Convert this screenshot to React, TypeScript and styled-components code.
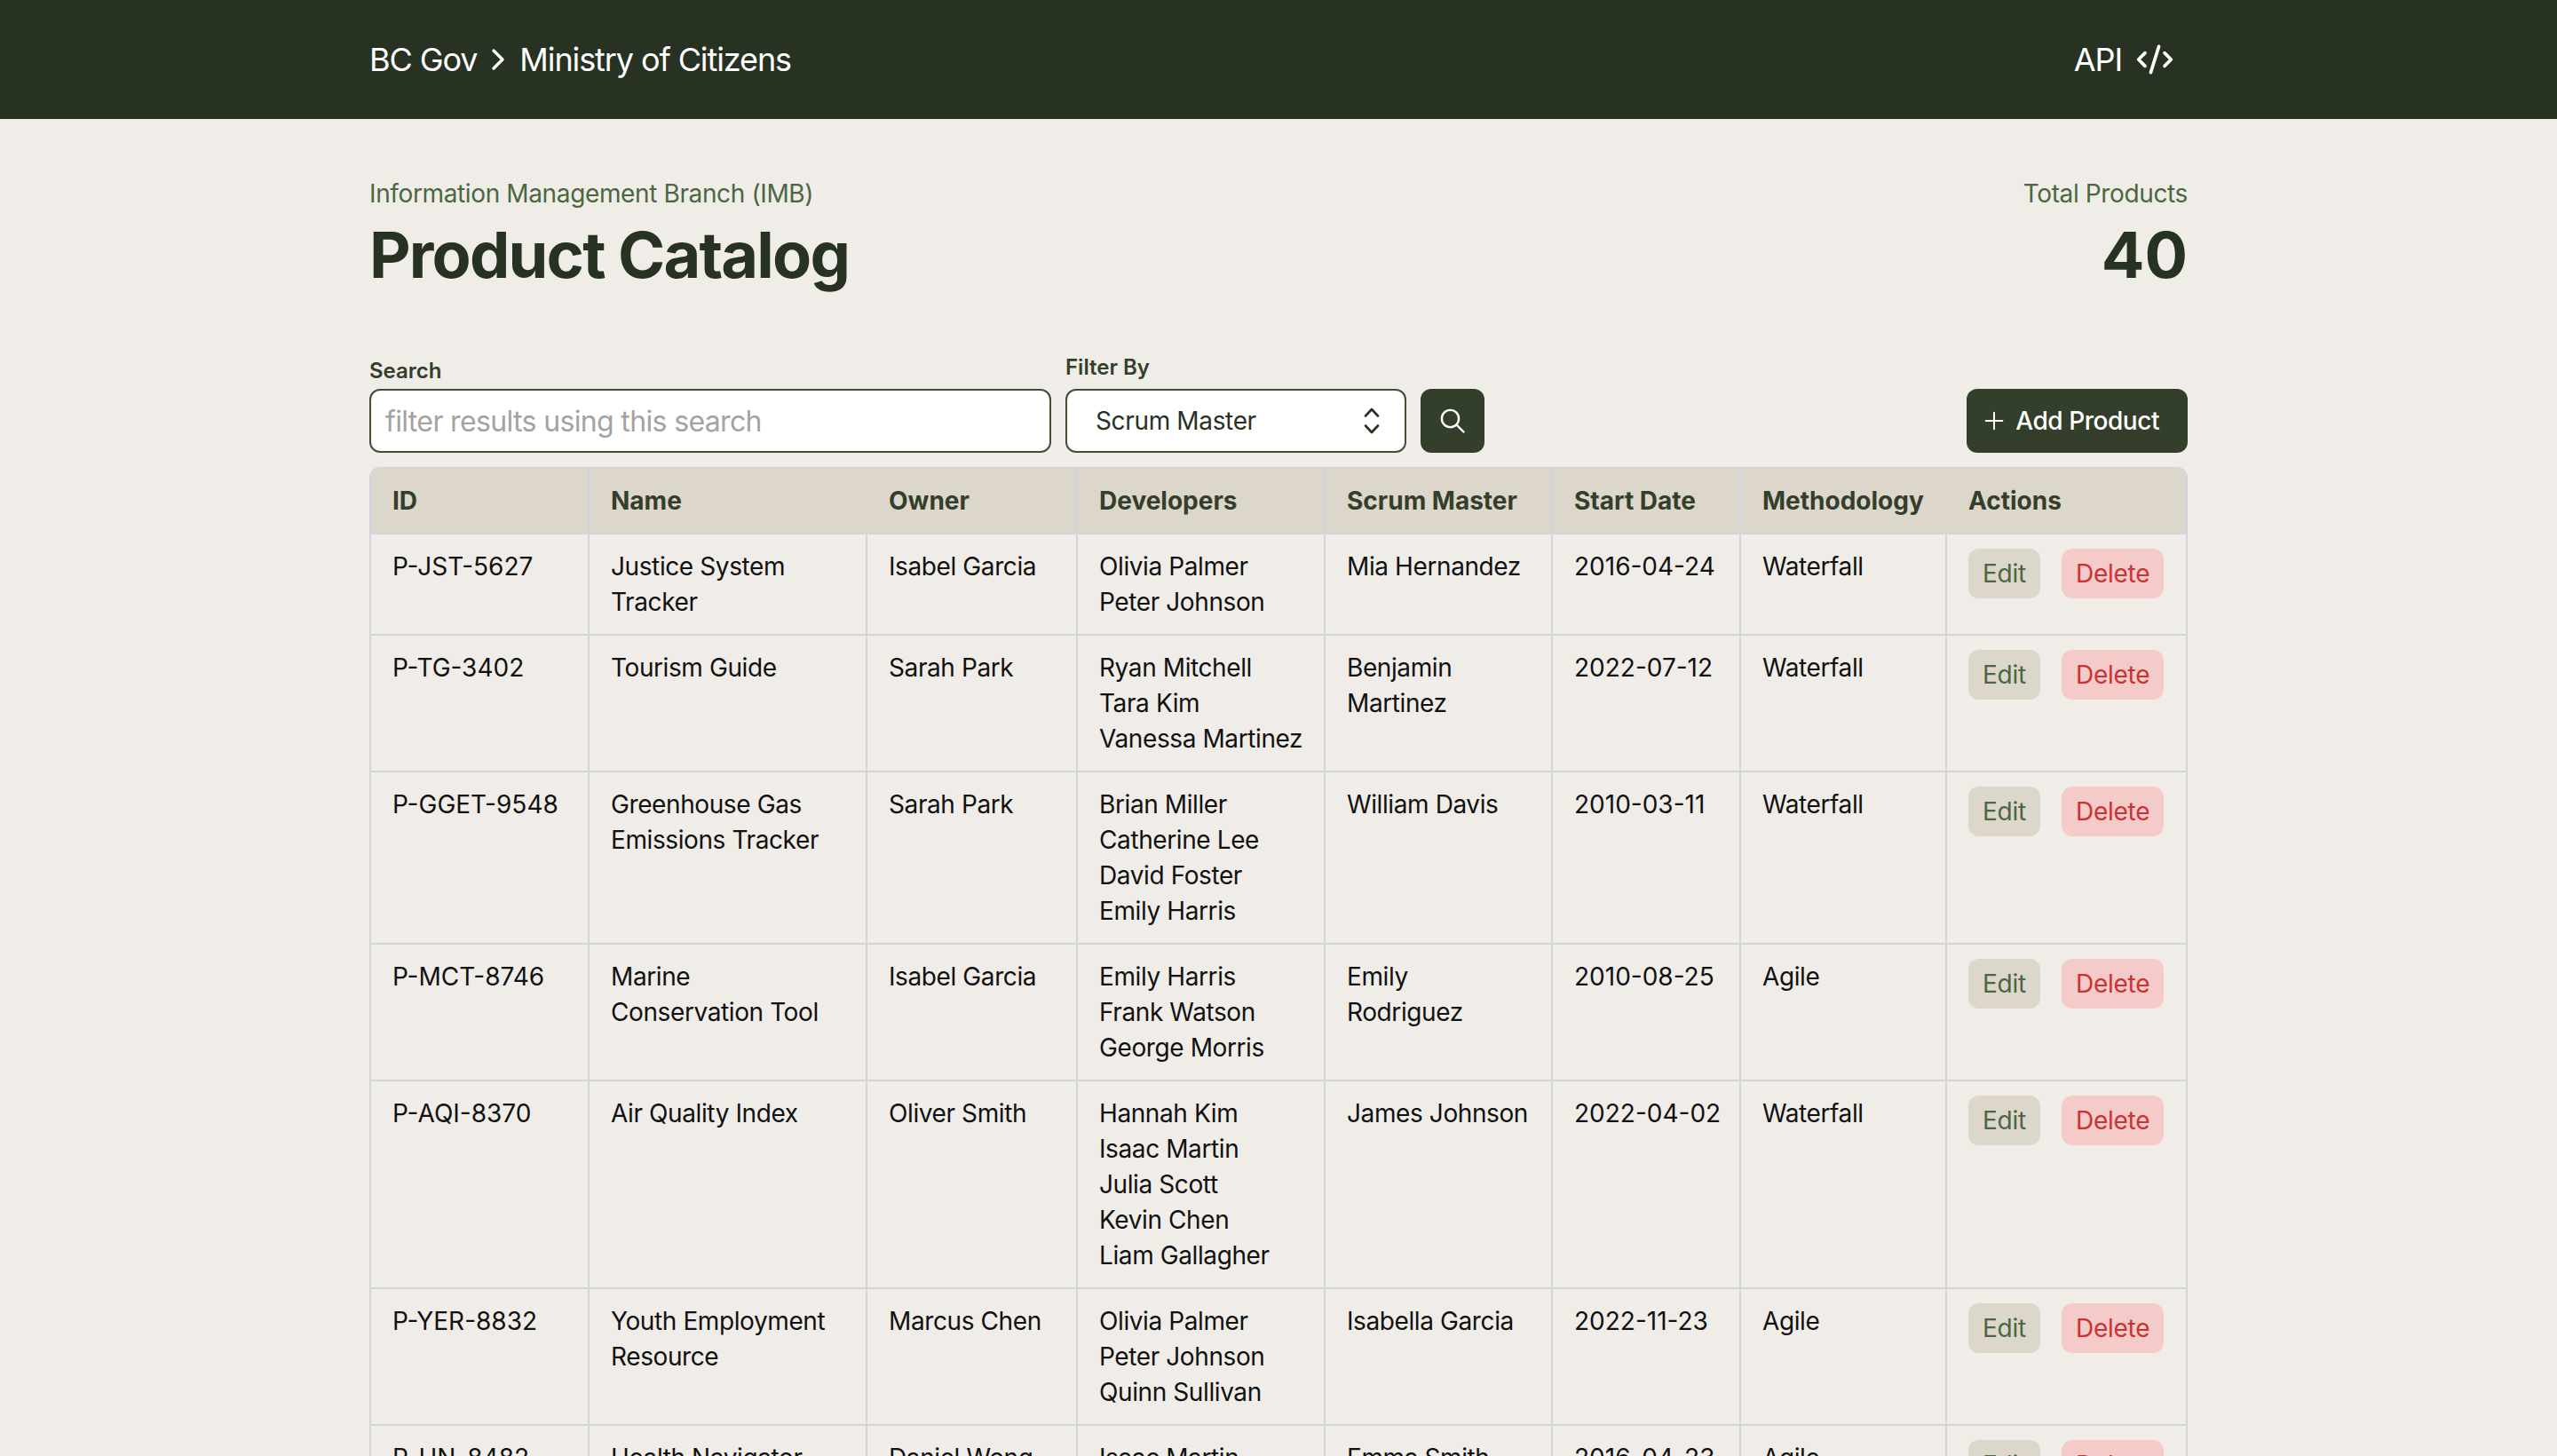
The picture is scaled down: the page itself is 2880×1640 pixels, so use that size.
import React from 'react';
import styled, { createGlobalStyle } from 'styled-components';
import { ChevronRight, CodeXml, Plus } from 'lucide-react';

interface Product {
  id: string;
  name: string;
  owner: string;
  developers: string[];
  scrumMaster: string[];
  startDate: string;
  methodology: string;
}

const products: Product[] = [
  { id: 'P-JST-5627', name: 'Justice System Tracker', owner: 'Isabel Garcia', developers: ['Olivia Palmer', 'Peter Johnson'], scrumMaster: ['Mia Hernandez'], startDate: '2016-04-24', methodology: 'Waterfall' },
  { id: 'P-TG-3402', name: 'Tourism Guide', owner: 'Sarah Park', developers: ['Ryan Mitchell', 'Tara Kim', 'Vanessa Martinez'], scrumMaster: ['Benjamin', 'Martinez'], startDate: '2022-07-12', methodology: 'Waterfall' },
  { id: 'P-GGET-9548', name: 'Greenhouse Gas Emissions Tracker', owner: 'Sarah Park', developers: ['Brian Miller', 'Catherine Lee', 'David Foster', 'Emily Harris'], scrumMaster: ['William Davis'], startDate: '2010-03-11', methodology: 'Waterfall' },
  { id: 'P-MCT-8746', name: 'Marine Conservation Tool', owner: 'Isabel Garcia', developers: ['Emily Harris', 'Frank Watson', 'George Morris'], scrumMaster: ['Emily', 'Rodriguez'], startDate: '2010-08-25', methodology: 'Agile' },
  { id: 'P-AQI-8370', name: 'Air Quality Index', owner: 'Oliver Smith', developers: ['Hannah Kim', 'Isaac Martin', 'Julia Scott', 'Kevin Chen', 'Liam Gallagher'], scrumMaster: ['James Johnson'], startDate: '2022-04-02', methodology: 'Waterfall' },
  { id: 'P-YER-8832', name: 'Youth Employment Resource', owner: 'Marcus Chen', developers: ['Olivia Palmer', 'Peter Johnson', 'Quinn Sullivan'], scrumMaster: ['Isabella Garcia'], startDate: '2022-11-23', methodology: 'Agile' },
  { id: 'P-HN-8482', name: 'Health Navigator', owner: 'Daniel Wong', developers: ['Isaac Martin'], scrumMaster: ['Emma Smith'], startDate: '2016-04-23', methodology: 'Agile' }
];

const columns = [
  { label: 'ID', width: 246 },
  { label: 'Name', width: 313 },
  { label: 'Owner', width: 237 },
  { label: 'Developers', width: 279 },
  { label: 'Scrum Master', width: 256 },
  { label: 'Start Date', width: 212 },
  { label: 'Methodology', width: 232 },
  { label: 'Actions', width: 271 }
];

const GlobalStyle = createGlobalStyle`
  html, body {
    margin: 0;
    height: 100%;
    overflow: hidden;
    background: #f0ede8;
    font-family: Inter, "Liberation Sans", sans-serif;
    color: #111111;
  }

  * {
    box-sizing: border-box;
  }
`;

const TopBar = styled.header`
  height: 134px;
  background: #283222;
  color: #ffffff;
`;

const Container = styled.div`
  width: 2048px;
  margin: 0 auto;
`;

const TopBarInner = styled(Container)`
  height: 100%;
  display: flex;
  align-items: center;
  justify-content: space-between;
  font-size: 36px;
  letter-spacing: -1.1px;
`;

const Breadcrumb = styled.div`
  display: flex;
  align-items: center;
  gap: 4px;
`;

const ApiLink = styled.div`
  display: flex;
  align-items: center;
  gap: 15px;
  padding-right: 15px;
`;

const Main = styled(Container)`
  padding-top: 64px;
`;

const TitleRow = styled.div`
  display: flex;
  justify-content: space-between;
  margin-bottom: 71px;
`;

const TitleBlock = styled.div<{ $right?: boolean }>`
  text-align: ${({ $right }) => ($right ? 'right' : 'left')};
`;

const Eyebrow = styled.div`
  font-size: 28px;
  line-height: 40px;
  letter-spacing: -0.37px;
  color: #4a6741;
`;

const BigText = styled.div<{ $numeric?: boolean }>`
  margin-top: 9px;
  font-size: 72px;
  line-height: 80px;
  font-weight: 700;
  color: #283222;
  letter-spacing: ${({ $numeric }) => ($numeric ? '0' : '-1.8px')};
`;

const Toolbar = styled.div`
  display: flex;
  align-items: flex-end;
  gap: 16px;
  margin-bottom: 16px;
`;

const Field = styled.label<{ $width: number }>`
  display: flex;
  flex-direction: column;
  width: ${({ $width }) => $width}px;
`;

const FieldLabel = styled.span<{ $gap: number }>`
  margin-bottom: ${({ $gap }) => $gap}px;
  font-size: 24px;
  line-height: 32px;
  font-weight: 600;
  color: #333f2a;
`;

const SearchInput = styled.input`
  height: 72px;
  padding: 0 16px;
  border: 2px solid #3d5033;
  border-radius: 12px;
  background: #ffffff;
  font-family: inherit;
  font-size: 32px;
  letter-spacing: -0.65px;
  outline: none;

  &::placeholder {
    color: #a3a3a3;
    opacity: 1;
  }
`;

const SelectBox = styled.div`
  position: relative;
  height: 72px;
`;

const Select = styled.select`
  appearance: none;
  width: 100%;
  height: 100%;
  padding: 0 32px;
  border: 2px solid #3d5033;
  border-radius: 12px;
  background: #ffffff;
  font-family: inherit;
  font-size: 28px;
  letter-spacing: -0.35px;
  color: #283222;
  outline: none;
`;

const SelectArrows = styled.svg`
  position: absolute;
  top: 20px;
  right: 28px;
  pointer-events: none;
`;

const DarkButton = styled.button`
  height: 72px;
  display: inline-flex;
  align-items: center;
  justify-content: center;
  border: none;
  border-radius: 12px;
  background: #333f2a;
  color: #ffffff;
  font-family: inherit;
  font-size: 28px;
  font-weight: 500;
  letter-spacing: -0.45px;
`;

const SearchButton = styled(DarkButton)`
  width: 72px;
`;

const AddButton = styled(DarkButton)`
  margin-left: auto;
  gap: 8px;
  padding: 0 32px 0 15px;
`;

const TableFrame = styled.div`
  border: 2px solid #d1d5db;
  border-radius: 12px;
  overflow: hidden;
`;

const Table = styled.table`
  width: 100%;
  table-layout: fixed;
  border-collapse: separate;
  border-spacing: 0;
  font-size: 28px;
  line-height: 40px;
`;

const HeadCell = styled.th`
  padding: 16px 24px;
  background: #ddd6cb;
  border-right: 2px solid #d1d5db;
  border-bottom: 2px solid #d1d5db;
  text-align: left;
  font-weight: 700;
  color: #333f2a;

  &:last-child {
    border-right: none;
  }
`;

const Cell = styled.td<{ $numeric?: boolean }>`
  padding: 16px 24px;
  border-right: 2px solid #d1d5db;
  border-bottom: 2px solid #d1d5db;
  vertical-align: top;
  letter-spacing: ${({ $numeric }) => ($numeric ? '0' : '-0.4px')};
  white-space: ${({ $numeric }) => ($numeric ? 'nowrap' : 'normal')};

  &:last-child {
    border-right: none;
  }
`;

const Line = styled.div`
  white-space: nowrap;
`;

const Actions = styled.div`
  display: flex;
  gap: 24px;
`;

const RowButton = styled.button<{ $danger?: boolean }>`
  height: 56px;
  padding: 0 16px;
  border: none;
  border-radius: 12px;
  background: ${({ $danger }) => ($danger ? '#f5cbca' : '#ddd6cb')};
  color: ${({ $danger }) => ($danger ? '#c93333' : '#4a6741')};
  font-family: inherit;
  font-size: 28px;
  letter-spacing: -0.25px;
`;

const App = (): JSX.Element => (
  <>
    <GlobalStyle />
    <TopBar>
      <TopBarInner>
        <Breadcrumb>
          BC Gov
          <ChevronRight size={40} strokeWidth={2} />
          Ministry of Citizens
        </Breadcrumb>
        <ApiLink>
          API
          <CodeXml size={44} strokeWidth={2} />
        </ApiLink>
      </TopBarInner>
    </TopBar>
    <Main>
      <TitleRow>
        <TitleBlock>
          <Eyebrow>Information Management Branch (IMB)</Eyebrow>
          <BigText>Product Catalog</BigText>
        </TitleBlock>
        <TitleBlock $right>
          <Eyebrow>Total Products</Eyebrow>
          <BigText $numeric>40</BigText>
        </TitleBlock>
      </TitleRow>
      <Toolbar>
        <Field $width={768}>
          <FieldLabel $gap={4}>Search</FieldLabel>
          <SearchInput placeholder="filter results using this search" />
        </Field>
        <Field $width={384}>
          <FieldLabel $gap={8}>Filter By</FieldLabel>
          <SelectBox>
            <Select defaultValue="Scrum Master">
              <option>Scrum Master</option>
            </Select>
            <SelectArrows width="22" height="32" viewBox="0 0 22 32" fill="none" stroke="#283222" strokeWidth="2.6" strokeLinecap="round" strokeLinejoin="round">
              <path d="M4 10.5 11 3l7 7.5" />
              <path d="M4 21.5l7 7.5 7-7.5" />
            </SelectArrows>
          </SelectBox>
        </Field>
        <SearchButton aria-label="Search">
          <svg width="28" height="28" viewBox="0 0 28 28" fill="none" stroke="currentColor" strokeWidth="2.4" strokeLinecap="round">
            <circle cx="11.5" cy="11.5" r="9.6" />
            <path d="M18.5 18.5l8 8" />
          </svg>
        </SearchButton>
        <AddButton>
          <Plus size={32} strokeWidth={1.5} />
          Add Product
        </AddButton>
      </Toolbar>
      <TableFrame>
        <Table>
          <colgroup>
            {columns.map((column) => (
              <col key={column.label} width={column.width} />
            ))}
          </colgroup>
          <thead>
            <tr>
              {columns.map((column) => (
                <HeadCell key={column.label}>{column.label}</HeadCell>
              ))}
            </tr>
          </thead>
          <tbody>
            {products.map((product) => (
              <tr key={product.id}>
                <Cell $numeric>{product.id}</Cell>
                <Cell>{product.name}</Cell>
                <Cell>{product.owner}</Cell>
                <Cell>
                  {product.developers.map((developer) => (
                    <Line key={developer}>{developer}</Line>
                  ))}
                </Cell>
                <Cell>
                  {product.scrumMaster.map((part) => (
                    <Line key={part}>{part}</Line>
                  ))}
                </Cell>
                <Cell $numeric>{product.startDate}</Cell>
                <Cell>{product.methodology}</Cell>
                <Cell>
                  <Actions>
                    <RowButton>Edit</RowButton>
                    <RowButton $danger>Delete</RowButton>
                  </Actions>
                </Cell>
              </tr>
            ))}
          </tbody>
        </Table>
      </TableFrame>
    </Main>
  </>
);

export default App;
